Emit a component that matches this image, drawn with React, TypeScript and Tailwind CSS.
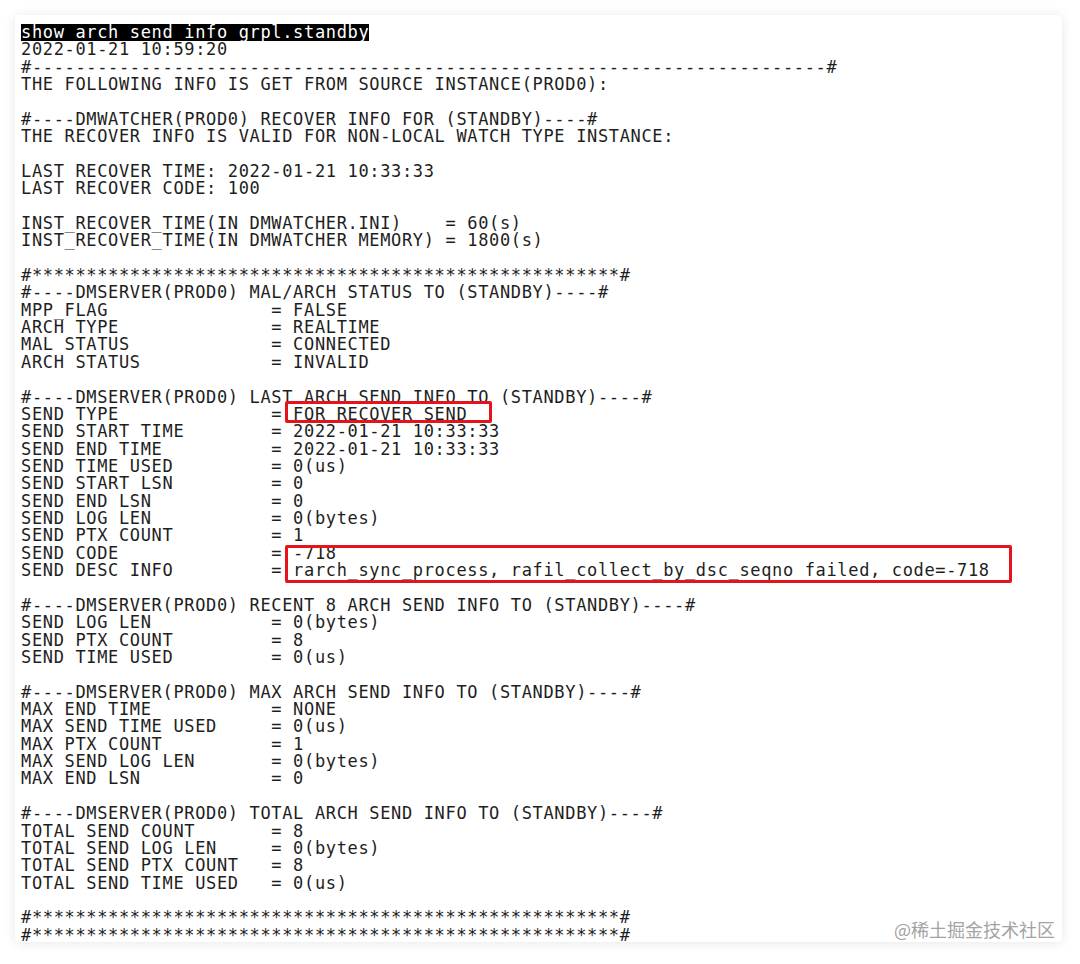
import React from "react";

const LABEL_W = 23;
const kv = (k: string, v: string) => k.padEnd(LABEL_W, " ") + "= " + v;
const stars = "#" + "*".repeat(54) + "#";

const lines: string[] = [
  "__HEAD__",
  "2022-01-21 10:59:20",
  "#" + "-".repeat(73) + "#",
  "THE FOLLOWING INFO IS GET FROM SOURCE INSTANCE(PROD0):",
  "",
  "#----DMWATCHER(PROD0) RECOVER INFO FOR (STANDBY)----#",
  "THE RECOVER INFO IS VALID FOR NON-LOCAL WATCH TYPE INSTANCE:",
  "",
  "LAST RECOVER TIME: 2022-01-21 10:33:33",
  "LAST RECOVER CODE: 100",
  "",
  "INST_RECOVER_TIME(IN DMWATCHER.INI)    = 60(s)",
  "INST_RECOVER_TIME(IN DMWATCHER MEMORY) = 1800(s)",
  "",
  stars,
  "#----DMSERVER(PROD0) MAL/ARCH STATUS TO (STANDBY)----#",
  kv("MPP_FLAG", "FALSE"),
  kv("ARCH TYPE", "REALTIME"),
  kv("MAL STATUS", "CONNECTED"),
  kv("ARCH STATUS", "INVALID"),
  "",
  "#----DMSERVER(PROD0) LAST ARCH SEND INFO TO (STANDBY)----#",
  kv("SEND TYPE", "FOR RECOVER SEND"),
  kv("SEND START TIME", "2022-01-21 10:33:33"),
  kv("SEND END TIME", "2022-01-21 10:33:33"),
  kv("SEND TIME USED", "0(us)"),
  kv("SEND START LSN", "0"),
  kv("SEND END LSN", "0"),
  kv("SEND LOG LEN", "0(bytes)"),
  kv("SEND PTX COUNT", "1"),
  kv("SEND CODE", "-718"),
  kv("SEND DESC INFO", "rarch_sync_process, rafil_collect_by_dsc_seqno failed, code=-718"),
  "",
  "#----DMSERVER(PROD0) RECENT 8 ARCH SEND INFO TO (STANDBY)----#",
  kv("SEND LOG LEN", "0(bytes)"),
  kv("SEND PTX COUNT", "8"),
  kv("SEND TIME USED", "0(us)"),
  "",
  "#----DMSERVER(PROD0) MAX ARCH SEND INFO TO (STANDBY)----#",
  kv("MAX END TIME", "NONE"),
  kv("MAX SEND TIME USED", "0(us)"),
  kv("MAX PTX COUNT", "1"),
  kv("MAX SEND LOG LEN", "0(bytes)"),
  kv("MAX END LSN", "0"),
  "",
  "#----DMSERVER(PROD0) TOTAL ARCH SEND INFO TO (STANDBY)----#",
  kv("TOTAL SEND COUNT", "8"),
  kv("TOTAL SEND LOG LEN", "0(bytes)"),
  kv("TOTAL SEND PTX COUNT", "8"),
  kv("TOTAL SEND TIME USED", "0(us)"),
  "",
  stars,
  stars,
];

export default function App() {
  return (
    <div className="w-[1080px] h-[964px] bg-white pt-[15px] pl-[15px]">
      <div className="relative w-[1047px] h-[927px] bg-white rounded-[5px] shadow-[0_1px_12px_rgba(0,0,0,0.10)] pt-[9px] pl-[6px]">
        <div className="font-['DejaVu_Sans_Mono',monospace] text-[17px] tracking-[0.65px] text-[#1e1e1e]">
          {lines.map((l, i) =>
            l === "__HEAD__" ? (
              <div key={i} className="h-[17.37px] leading-[17.37px] whitespace-pre">
                <span className="inline-block h-[17px] leading-[17px] bg-black text-white">show arch send info grpl.standby</span>
              </div>
            ) : (
              <div key={i} className="h-[17.37px] leading-[17.37px] whitespace-pre">
                {l}
              </div>
            )
          )}
        </div>
        <div className="absolute left-[270px] top-[386px] w-[207px] h-[22px] border-[3px] border-[#e5131b] rounded-[2px]" />
        <div className="absolute left-[270px] top-[530px] w-[727px] h-[38px] border-[3px] border-[#e5131b] rounded-[2px]" />
        <div className="absolute right-[7px] bottom-[1px] font-['Noto_Sans_CJK_SC',sans-serif] text-[18px] leading-[24px] text-[#a3a3a3]">
          @稀土掘金技术社区
        </div>
      </div>
    </div>
  );
}
